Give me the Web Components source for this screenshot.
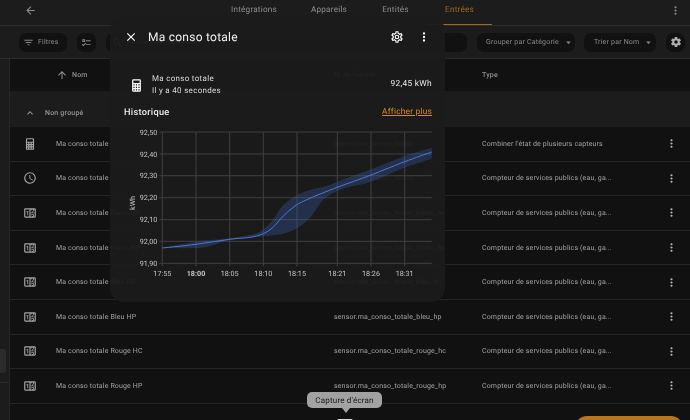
<!DOCTYPE html>
<html lang="fr"><head><meta charset="utf-8"><title>Entrées</title>
<style>
html,body{margin:0;height:420px;overflow:hidden;background:#1c1c1c}
body{font-family:Roboto,"Liberation Sans",sans-serif;color:#a3a3a3;text-rendering:geometricPrecision}
</style></head><body>
<app-shell></app-shell>
<script>
const P={
calc:"M7,2H17A2,2 0 0,1 19,4V20A2,2 0 0,1 17,22H7A2,2 0 0,1 5,20V4A2,2 0 0,1 7,2M7,4V8H17V4H7M7,10V12H9V10H7M11,10V12H13V10H11M15,10V12H17V10H15M7,14V16H9V14H7M11,14V16H13V14H11M15,14V16H17V14H15M7,18V20H9V18H7M11,18V20H13V18H11M15,18V20H17V18H15Z",
clock:"M12,20A8,8 0 0,0 20,12A8,8 0 0,0 12,4A8,8 0 0,0 4,12A8,8 0 0,0 12,20M12,2A10,10 0 0,1 22,12A10,10 0 0,1 12,22C6.47,22 2,17.5 2,12A10,10 0 0,1 12,2M12.5,7V12.25L17,14.92L16.25,16.15L11,13V7H12.5Z",
counter:"M4,4H20A2,2 0 0,1 22,6V18A2,2 0 0,1 20,20H4A2,2 0 0,1 2,18V6A2,2 0 0,1 4,4M4,6V18H11V6H4M20,18V6H18.76C19,6.54 18.95,7.07 18.95,7.13C18.88,7.8 18.41,8.5 18.24,8.75L15.91,11.3L19.23,11.28L19.24,12.5L14.04,12.47L14,11.47C14,11.47 17.05,8.24 17.2,7.95C17.34,7.67 17.91,6 16.5,6C15.27,6.05 15.41,7.3 15.41,7.3L13.87,7.31C13.87,7.31 13.88,6.65 14.25,6H13V18H15.58L15.57,17.14L16.54,17.13C16.54,17.13 17.45,16.97 17.46,16.08C17.5,15.08 16.65,15.08 16.5,15.08C16.37,15.08 15.43,15.13 15.43,15.95H13.91C13.91,15.95 13.95,13.89 16.5,13.89C19.1,13.89 18.96,15.91 18.96,15.91C18.96,15.91 19,17.16 17.85,17.63L18.37,18H20M8.92,16H7.42V10.2L5.62,10.76V9.53L8.76,8.41H8.92V16Z",
dots:"M12,16A2,2 0 0,1 14,18A2,2 0 0,1 12,20A2,2 0 0,1 10,18A2,2 0 0,1 12,16M12,10A2,2 0 0,1 14,12A2,2 0 0,1 12,14A2,2 0 0,1 10,12A2,2 0 0,1 12,10M12,4A2,2 0 0,1 14,6A2,2 0 0,1 12,8A2,2 0 0,1 10,6A2,2 0 0,1 12,4Z",
close:"M19,6.41L17.59,5L12,10.59L6.41,5L5,6.41L10.59,12L5,17.59L6.41,19L12,13.41L17.59,19L19,17.59L13.41,12L19,6.41Z",
cog:"M12,15.5A3.5,3.5 0 0,1 8.5,12A3.5,3.5 0 0,1 12,8.5A3.5,3.5 0 0,1 15.5,12A3.5,3.5 0 0,1 12,15.5M19.43,12.97C19.47,12.65 19.5,12.33 19.5,12C19.5,11.67 19.47,11.34 19.43,11L21.54,9.37C21.73,9.22 21.78,8.95 21.66,8.73L19.66,5.27C19.54,5.05 19.27,4.96 19.05,5.05L16.56,6.05C16.04,5.66 15.5,5.32 14.87,5.07L14.5,2.42C14.46,2.18 14.25,2 14,2H10C9.75,2 9.54,2.18 9.5,2.42L9.13,5.07C8.5,5.32 7.96,5.66 7.44,6.05L4.95,5.05C4.73,4.96 4.46,5.05 4.34,5.27L2.34,8.73C2.21,8.95 2.27,9.22 2.46,9.37L4.57,11C4.53,11.34 4.5,11.67 4.5,12C4.5,12.33 4.53,12.65 4.57,12.97L2.46,14.63C2.27,14.78 2.21,15.05 2.34,15.27L4.34,18.73C4.46,18.95 4.73,19.03 4.95,18.95L7.44,17.94C7.96,18.34 8.5,18.68 9.13,18.93L9.5,21.58C9.54,21.82 9.75,22 10,22H14C14.25,22 14.46,21.82 14.5,21.58L14.87,18.93C15.5,18.67 16.04,18.34 16.56,17.94L19.05,18.95C19.27,19.03 19.54,18.95 19.66,18.73L21.66,15.27C21.78,15.05 21.73,14.78 21.54,14.63L19.43,12.97Z",
cogo:"M12,8A4,4 0 0,1 16,12A4,4 0 0,1 12,16A4,4 0 0,1 8,12A4,4 0 0,1 12,8M12,10A2,2 0 0,0 10,12A2,2 0 0,0 12,14A2,2 0 0,0 14,12A2,2 0 0,0 12,10M10,22C9.75,22 9.54,21.82 9.5,21.58L9.13,18.93C8.5,18.68 7.96,18.34 7.44,17.94L4.95,18.95C4.73,19.03 4.46,18.95 4.34,18.73L2.34,15.27C2.21,15.05 2.27,14.78 2.46,14.63L4.57,12.97L4.5,12L4.57,11L2.46,9.37C2.27,9.22 2.21,8.95 2.34,8.73L4.34,5.27C4.46,5.05 4.73,4.96 4.95,5.05L7.44,6.05C7.96,5.66 8.5,5.32 9.13,5.07L9.5,2.42C9.54,2.18 9.75,2 10,2H14C14.25,2 14.46,2.18 14.5,2.42L14.87,5.07C15.5,5.32 16.04,5.66 16.56,6.05L19.05,5.05C19.27,4.96 19.54,5.05 19.66,5.27L21.66,8.73C21.79,8.95 21.73,9.22 21.54,9.37L19.43,11L19.5,12L19.43,13L21.54,14.63C21.73,14.78 21.79,15.05 21.66,15.27L19.66,18.73C19.54,18.95 19.27,19.04 19.05,18.95L16.56,17.95C16.04,18.34 15.5,18.68 14.87,18.93L14.5,21.58C14.46,21.82 14.25,22 14,22H10M11.25,4L10.88,6.61C9.68,6.86 8.62,7.5 7.85,8.39L5.44,7.35L4.69,8.65L6.8,10.2C6.4,11.37 6.4,12.64 6.8,13.8L4.68,15.36L5.43,16.66L7.86,15.62C8.63,16.5 9.68,17.14 10.87,17.38L11.24,20H12.76L13.13,17.39C14.32,17.14 15.37,16.5 16.14,15.62L18.57,16.66L19.32,15.36L17.2,13.81C17.6,12.64 17.6,11.37 17.2,10.2L19.31,8.65L18.56,7.35L16.15,8.39C15.38,7.5 14.32,6.86 13.12,6.62L12.75,4H11.25Z",
back:"M20,11V13H8L13.5,18.5L12.08,19.92L4.16,12L12.08,4.08L13.5,5.5L8,11H20Z",
up:"M13,20H11V8L5.5,13.5L4.08,12.08L12,4.16L19.92,12.08L18.5,13.5L13,8V20Z",
filter:"M6,13H18V11H6M3,6V8H21V6M10,18H14V16H10V18Z",
chev:"M7.41,15.41L12,10.83L16.59,15.41L18,14L12,8L6,14L7.41,15.41Z",
down:"M7,10L12,15L17,10H7Z",
search:"M9.5,3A6.5,6.5 0 0,1 16,9.5C16,11.11 15.41,12.59 14.44,13.73L14.71,14H15.5L20.5,19L19,20.5L14,15.5V14.71L13.73,14.44C12.59,15.41 11.11,16 9.5,16A6.5,6.5 0 0,1 3,9.5A6.5,6.5 0 0,1 9.5,3M9.5,5C7,5 5,7 5,9.5C5,12 7,14 9.5,14C12,14 14,12 14,9.5C14,7 12,5 9.5,5Z",
checks:"M3,5H9V11H3V5M5,7V9H7V7H5M11,7H21V9H11V7M11,15H21V17H11V15M5,20L1.5,16.5L2.91,15.09L5,17.17L9.59,12.59L11,14L5,20Z"};
function def(name,html){customElements.define(name,class extends HTMLElement{connectedCallback(){if(this.shadowRoot)return;const r=this.attachShadow({mode:'open'});r.innerHTML=typeof html==='function'?html(this):html;}});}
def('m-icon',h=>`<style>:host{display:inline-flex;width:var(--s,12px);height:var(--s,12px);flex:none;color:inherit}svg{width:100%;height:100%;display:block;fill:currentColor}</style><svg viewBox="0 0 24 24"><path d="${P[h.getAttribute('n')]}"/></svg>`);
def('tab-bar',`<style>:host{display:flex;align-items:stretch;height:25px;border-bottom:1px solid #2c2c2c;font-size:8.2px;letter-spacing:.2px;color:#8f8f8f}
.back{width:40px;display:flex;align-items:center;justify-content:center;margin-left:10px;padding-bottom:5px;box-sizing:border-box;color:#8a8a8a;--s:13px}
.tabs{display:flex;margin-left:164px}
.t{display:flex;align-items:center;justify-content:center;height:25px;padding-bottom:6px;box-sizing:border-box}
.on{color:#a06a20;border-bottom:1.5px solid #a06a20;padding-bottom:4.5px}
.end{margin-left:auto;width:30px;display:flex;align-items:center;justify-content:center;padding-bottom:5px;box-sizing:border-box;--s:13px;color:#8a8a8a}
</style><div class="back"><m-icon n="back"></m-icon></div><div class="tabs"><div class="t" style="width:80px">Intégrations</div><div class="t" style="width:70px">Appareils</div><div class="t" style="width:63px">Entités</div><div class="t on" style="width:65px">Entrées</div></div><div class="end"><m-icon n="dots"></m-icon></div>`);
def('tool-chip',`<style>:host{display:flex;align-items:center;height:19px;background:#111;border-radius:7px;box-sizing:border-box;font-size:7px;letter-spacing:.2px;color:#8b8b8b;white-space:nowrap;flex:none;filter:grayscale(1)}</style><slot></slot>`);
def('filter-bar',`<style>:host{display:flex;align-items:center;gap:10px;height:32px;padding-left:19px;border-bottom:1px solid #2a2a2a;--s:11px}
.gap{display:inline-block;width:4px}
.g2{display:inline-block;width:4px}
</style>
<tool-chip style="width:48px;padding-left:4px"><m-icon n="filter"></m-icon><span class="gap"></span>Filtres</tool-chip>
<tool-chip style="width:19px;justify-content:center"><m-icon n="checks"></m-icon></tool-chip>
<tool-chip style="width:361px;padding-left:6px"><m-icon n="search"></m-icon><span class="gap"></span>Rechercher 8 entrées</tool-chip>
<tool-chip style="width:98px;padding-left:9px">Grouper par Catégorie<span class="g2"></span><m-icon n="down"></m-icon></tool-chip>
<tool-chip style="width:72px;margin-left:-1px;padding-left:10px">Trier par Nom<span class="g2"></span><m-icon n="down"></m-icon></tool-chip>
<tool-chip style="width:19px;justify-content:center;--s:12px;color:#b0b0b0"><m-icon n="cog"></m-icon></tool-chip>`);
const cols=`display:grid;grid-template-columns:46px 278px 148px 1fr 25px;align-items:center`;
def('table-head',`<style>:host{${cols};height:32px;padding-bottom:1px;box-sizing:border-box;background:#111;font-size:7px;font-weight:500;letter-spacing:.2px;color:#8f8f8f;filter:grayscale(1)}
.n{display:flex;align-items:center;gap:4px;--s:12px}
.x{grid-column:2}
</style><div class="x"><span class="n"><m-icon n="up"></m-icon>Nom</span></div><div>ID de l'entité</div><div>Type</div>`);
def('group-row',`<style>:host{display:flex;align-items:center;height:36px;background:#1c1c1c;font-size:7px;font-weight:500;letter-spacing:.2px;color:#959595;padding-left:14px;padding-top:8px;box-sizing:border-box;--s:12px;gap:9px;filter:grayscale(1)}</style><m-icon n="chev"></m-icon>Non groupé`);
def('data-row',h=>`<style>:host{${cols};height:34.6px;box-sizing:border-box;background:#111;border-bottom:1px solid #252525;font-size:7px;letter-spacing:.15px;color:#a2a2a2;filter:grayscale(1)}
.i{display:flex;justify-content:center;padding-right:6px;--s:14px;color:#a4a4a4}.d{display:flex;justify-content:flex-start;--s:13px;color:#b8b8b8}
div{white-space:nowrap}
</style><div class="i"><m-icon n="${h.getAttribute('icon')}"></m-icon></div><div>${h.getAttribute('name')}</div><div>${h.getAttribute('eid')}</div><div>${h.getAttribute('type')}</div><div class="d"><m-icon n="dots"></m-icon></div>`);
const sx=v=>(v/3+110-124).toFixed(1), sy=v=>(v/3+120-125).toFixed(1);
const lineOf=a=>a.map(p=>[+sx(p[0]),+sy(p[1])]);
function smooth(pts){let d=`M${pts[0][0]},${pts[0][1]}`;for(let i=0;i<pts.length-1;i++){const p0=pts[i-1]||pts[i],p1=pts[i],p2=pts[i+1],p3=pts[i+2]||p2;const c1=[p1[0]+(p2[0]-p0[0])/6,p1[1]+(p2[1]-p0[1])/6],c2=[p2[0]-(p3[0]-p1[0])/6,p2[1]-(p3[1]-p1[1])/6];d+=`C${c1[0].toFixed(1)},${c1[1].toFixed(1)} ${c2[0].toFixed(1)},${c2[1].toFixed(1)} ${p2[0]},${p2[1]}`}return d}
const L=lineOf([[157,381],[258,370],[359,355],[420,349],[460,338],[490,318],[520,285],[555,255],[600,232],[682,199],[783,162],[884,122],[965,93]]);
const U=lineOf([[157,381],[258,362],[359,352],[430,340],[460,325],[490,295],[520,252],[561,222],[600,207],[650,195],[682,182],[783,145],[884,105],[965,80]]);
const D=lineOf([[965,113],[884,140],[783,182],[720,197],[682,210],[650,228],[630,248],[600,290],[561,322],[520,338],[490,343],[460,346],[420,350],[359,357],[300,375],[258,381],[157,381]]);
const ys=[[33,'92,50'],[99,'92,40'],[164,'92,30'],[230,'92,20'],[296,'92,10'],[361,'92,00'],[427,'91,90']];
const xs=[[157,'17:55'],[258,'18:00'],[359,'18:05'],[460,'18:10'],[561,'18:15'],[682,'18:21'],[783,'18:26'],[884,'18:31']];
def('hist-chart',`<style>:host{display:block;width:320px;height:158px}svg{display:block}text{font:7.2px Roboto,"Liberation Sans",sans-serif;fill:#c4c4c4}</style><svg width="320" height="158" viewBox="0 0 320 158">
${ys.map(y=>`<path d="M${+sx(157)-3},${sy(y[0])}H${sx(965)}" stroke="#404040" stroke-width="1"/><text x="${+sx(157)-5}" y="${+sy(y[0])+2.7}" text-anchor="end">${y[1]}</text>`).join('')}
${xs.map(x=>`<path d="M${sx(x[0])},${sy(33)}V${+sy(427)+3}" stroke="#404040" stroke-width="1"/><text x="${sx(x[0])}" y="${+sy(427)+13}" text-anchor="middle"${x[1]=='18:00'?' style="font-weight:700"':''}>${x[1]}</text>`).join('')}
<text transform="translate(10.5,77) rotate(-90)" text-anchor="middle">kWh</text>
<path d="${smooth(U)}L${D[0].join(',')}${smooth(D).replace(/^M[^C]+/,'')}Z" fill="#3a5fb0" fill-opacity=".32"/>
<path d="${smooth(L)}" fill="none" stroke="#4a79d8" stroke-width="1"/>
</svg>`);
def('more-dialog',`<style>:host{position:absolute;left:110px;top:17px;width:335px;height:285px;background:rgba(28,28,28,.945);border-radius:14px;display:flex;flex-direction:column;box-sizing:border-box;color:#e4e4e4}
.hd{display:flex;align-items:center;height:40px;padding-left:14px;padding-right:14px;flex:none;--s:14px;color:#fff}
h2{margin:0 0 0 10px;font-size:12px;font-weight:400;letter-spacing:.25px;color:#f0f0f0}
.hd m-icon:nth-of-type(2){margin-left:auto}.hd m-icon:nth-of-type(3){margin-left:13px}
.st{display:flex;align-items:center;height:34px;margin-top:11px;padding:0 13px 0 19px;font-size:8px;letter-spacing:.3px;line-height:11.7px;--s:15px;color:#d8d8d8}
.st m-icon{color:#fff;margin-right:8px}.st b{margin-left:auto;font-weight:400;font-size:8.4px;color:#e8e8e8}
.h{display:flex;align-items:center;justify-content:space-between;padding:0 13px 0 14px;margin-top:1px;height:18px}
.h b{font-size:9.2px;font-weight:500;letter-spacing:.3px;color:#ececec}.h a{font-size:8.4px;letter-spacing:.2px;color:#d98a1f;text-decoration:underline}
hist-chart{margin:5px 0 0 14px}
</style><div class="hd"><m-icon n="close"></m-icon><h2>Ma conso totale</h2><m-icon n="cogo"></m-icon><m-icon n="dots"></m-icon></div>
<div class="st"><m-icon n="calc"></m-icon><div>Ma conso totale<br>Il y a 40 secondes</div><b>92,45 kWh</b></div>
<div class="h"><b>Historique</b><a>Afficher plus</a></div><hist-chart></hist-chart>`);
def('shot-tip',`<style>:host{position:absolute;left:307px;top:392px;width:75px;height:16px;background:#a2a2a2;border-radius:5px;color:#1a1a1a;font-size:8px;letter-spacing:.2px;display:flex;align-items:center;justify-content:center}
i{position:absolute;left:35px;top:16px;width:0;height:0;border-left:4px solid transparent;border-right:4px solid transparent;border-top:5px solid #a2a2a2}</style>Capture d'écran<i></i>`);
const T='Compteur de services publics (eau, ga...';
const rows=[['calc','Ma conso totale','sensor.ma_conso_totale',"Combiner l'état de plusieurs capteurs"],['clock','Ma conso totale','sensor.ma_conso_totale',T],['counter','Ma conso totale Blanc HC','sensor.ma_conso_totale_blanc_hc',T],['counter','Ma conso totale Blanc HP','sensor.ma_conso_totale_blanc_hp',T],['counter','Ma conso totale Bleu HC','sensor.ma_conso_totale_bleu_hc',T],['counter','Ma conso totale Bleu HP','sensor.ma_conso_totale_bleu_hp',T],['counter','Ma conso totale Rouge HC','sensor.ma_conso_totale_rouge_hc',T],['counter','Ma conso totale Rouge HP','sensor.ma_conso_totale_rouge_hp',T]];
def('app-shell',`<style>:host{display:flex;width:690px;height:420px;position:relative;overflow:hidden;background:#1c1c1c;filter:blur(.3px)}
.side{width:9px;border-right:1px solid #262626;flex:none;display:flex;flex-direction:column}
.side i{display:block;margin-top:349px;height:24px;width:6px;background:#2b2b2b;border-radius:0 2px 2px 0}
.side u{display:block;margin-top:9px;height:1px;background:#2a2a2a}
main{flex:1;min-width:0;background:#111}
.tp{background:#1c1c1c;margin-left:-10px}
.fab{position:absolute;left:575px;top:416px;width:108px;height:30px;background:#b8761f;border-radius:12px}
.mini{position:absolute;left:337px;top:419px;width:16px;height:6px;background:#ddd;border-radius:2px}
</style><div class="side"><i></i><u></u></div><main><div class="tp"><tab-bar></tab-bar></div><div class="tp"><filter-bar></filter-bar></div><table-head></table-head><group-row></group-row>
${rows.map(r=>`<data-row icon="${r[0]}" name="${r[1]}" eid="${r[2]}" type="${r[3]}"></data-row>`).join('')}
</main><more-dialog></more-dialog><shot-tip></shot-tip><div class="fab"></div><div class="mini"></div>`);
</script>
</body></html>
